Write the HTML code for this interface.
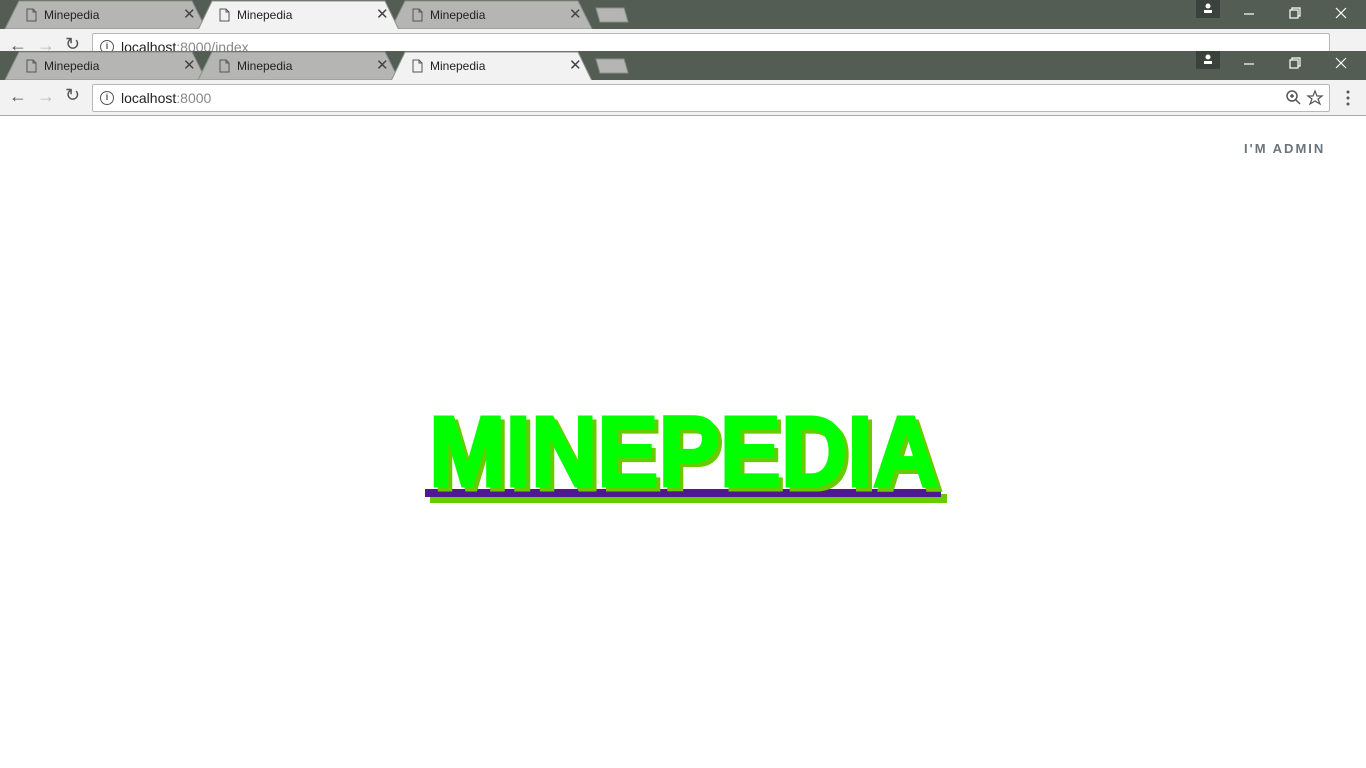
<!DOCTYPE html>
<html><head><meta charset="utf-8"><style>
*{margin:0;padding:0;box-sizing:border-box}
body{width:1366px;height:768px;overflow:hidden;background:#fff;font-family:"Liberation Sans",Arial,sans-serif;position:relative}
.chrome{position:absolute;left:0;width:1366px;height:117px;overflow:hidden}
.strip{position:absolute;left:0;top:0;width:1366px;height:29px;background:#535d53}
.tb{position:absolute;left:0;top:29px;width:1366px;height:36px;background:#f2f2f2;border-bottom:1px solid #a8a8a8}
.omni{position:absolute;left:92px;top:4px;width:1238px;height:28px;background:#fff;border:1px solid #b8b8b8;border-radius:2px}
.url{position:absolute;left:28px;top:5px;font-size:14px;color:#222}
.url span{color:#888}
.tabt{position:absolute;top:8px;font-size:12px;color:#222;font-family:"Liberation Sans",sans-serif}
.x{position:absolute;top:5px;font-size:15px;color:#444}
</style></head><body>

<div class="chrome" style="top:0;height:51px">
 <div class="strip">
  <svg width="1366" height="29" style="position:absolute;left:0;top:0">
   <polygon points="5,29 19,1 192,1 206,29" fill="#b5b6b3" stroke="#8b918b"/>
   <polygon points="391,29 405,1 578,1 592,29" fill="#b5b6b3" stroke="#8b918b"/>
   <polygon points="198,30 212,1 385,1 399,30" fill="#f2f2f2" stroke="#8b918b"/>
   <polygon points="596,8 624,8 628,22 600,22" fill="#b5b6b3" stroke="#8b918b"/>
   <g fill="none" stroke="#555" stroke-width="1"><path d="M27 9h6l3 3v9h-9z M33 9v3h3"/><path d="M220 9h6l3 3v9h-9z M226 9v3h3"/><path d="M413 9h6l3 3v9h-9z M419 9v3h3"/></g>
   <rect x="1196" y="0" width="24" height="18" fill="#3b423b"/>
   <circle cx="1208" cy="6" r="2.5" fill="#fff"/><rect x="1204" y="10" width="8" height="3" fill="#fff"/>
   <g stroke="#fff" stroke-width="1.2" fill="none"><path d="M1244 14h10"/><rect x="1290" y="10" width="8" height="8"/><path d="M1292 10v-2h8v8h-2"/><path d="M1336 8l10 10M1346 8l-10 10"/></g>
  </svg>
  <div class="tabt" style="left:44px">Minepedia</div><div class="x" style="left:183px">✕</div>
  <div class="tabt" style="left:237px">Minepedia</div><div class="x" style="left:376px">✕</div>
  <div class="tabt" style="left:430px">Minepedia</div><div class="x" style="left:569px">✕</div>
 </div>
 <div class="tb">
  <div style="position:absolute;left:9px;top:6px;font-size:18px;color:#555">←</div>
  <div style="position:absolute;left:37px;top:6px;font-size:18px;color:#bbb">→</div>
  <div style="position:absolute;left:65px;top:5px;font-size:18px;color:#555">↻</div>
  <div class="omni"><div style="position:absolute;left:7px;top:6px;width:14px;height:14px;border:1.5px solid #555;border-radius:50%;font-size:9px;text-align:center;line-height:11px;font-weight:bold;color:#555">i</div><div class="url">localhost<span>:8000/index</span></div></div>
 </div>
</div>

<div class="chrome" style="top:51px">
 <div class="strip">
  <svg width="1366" height="29" style="position:absolute;left:0;top:0">
   <polygon points="5,29 19,1 192,1 206,29" fill="#b5b6b3" stroke="#8b918b"/>
   <polygon points="198,29 212,1 385,1 399,29" fill="#b5b6b3" stroke="#8b918b"/>
   <polygon points="391,30 405,1 578,1 592,30" fill="#f2f2f2" stroke="#8b918b"/>
   <polygon points="596,8 624,8 628,22 600,22" fill="#b5b6b3" stroke="#8b918b"/>
   <g fill="none" stroke="#555" stroke-width="1"><path d="M27 9h6l3 3v9h-9z M33 9v3h3"/><path d="M220 9h6l3 3v9h-9z M226 9v3h3"/><path d="M413 9h6l3 3v9h-9z M419 9v3h3"/></g>
   <rect x="1196" y="0" width="24" height="18" fill="#3b423b"/>
   <circle cx="1208" cy="6" r="2.5" fill="#fff"/><rect x="1204" y="10" width="8" height="3" fill="#fff"/>
   <g stroke="#fff" stroke-width="1.2" fill="none"><path d="M1244 13h10"/><rect x="1290" y="9" width="8" height="8"/><path d="M1292 9v-2h8v8h-2"/><path d="M1336 7l10 10M1346 7l-10 10"/></g>
  </svg>
  <div class="tabt" style="left:44px">Minepedia</div><div class="x" style="left:183px">✕</div>
  <div class="tabt" style="left:237px">Minepedia</div><div class="x" style="left:376px">✕</div>
  <div class="tabt" style="left:430px">Minepedia</div><div class="x" style="left:569px">✕</div>
 </div>
 <div class="tb">
  <div style="position:absolute;left:9px;top:6px;font-size:18px;color:#555">←</div>
  <div style="position:absolute;left:37px;top:6px;font-size:18px;color:#bbb">→</div>
  <div style="position:absolute;left:65px;top:5px;font-size:18px;color:#555">↻</div>
  <div class="omni"><div style="position:absolute;left:7px;top:6px;width:14px;height:14px;border:1.5px solid #555;border-radius:50%;font-size:9px;text-align:center;line-height:11px;font-weight:bold;color:#555">i</div><div class="url">localhost<span>:8000</span>
   </div>
   <svg width="40" height="20" style="position:absolute;left:1192px;top:4px"><g fill="none" stroke="#555" stroke-width="1.5"><circle cx="7" cy="7" r="5"/><path d="M11 11l4 4M5 7h4M7 5v4"/><path d="M30 2l2 5h5l-4 3 2 5-5-3-5 3 2-5-4-3h5z" stroke-width="1.2"/></g></svg>
  </div>
  <svg width="6" height="16" style="position:absolute;left:1345px;top:10px"><g fill="#555"><circle cx="3" cy="2" r="1.5"/><circle cx="3" cy="8" r="1.5"/><circle cx="3" cy="14" r="1.5"/></g></svg>
 </div>
</div>

<div style="position:absolute;left:1244px;top:141px;font-size:13px;font-weight:bold;letter-spacing:2px;color:#6b747b">I'M ADMIN</div>

<svg width="1366" height="768" style="position:absolute;left:0;top:0">
 <rect x="430" y="494" width="517" height="9" fill="#66cc00"/>
 <rect x="425" y="489" width="516" height="8" fill="#4f1a8f"/>
 <text x="433" y="490" textLength="510" lengthAdjust="spacingAndGlyphs" font-family="Liberation Sans" font-weight="bold" font-size="100" fill="#66cc00" stroke="#66cc00" stroke-width="3" stroke-linejoin="miter">MINEPEDIA</text>
 <text x="429" y="486" textLength="510" lengthAdjust="spacingAndGlyphs" font-family="Liberation Sans" font-weight="bold" font-size="100" fill="#00ff00" stroke="#00ff00" stroke-width="3" stroke-linejoin="miter">MINEPEDIA</text>
</svg>
</body></html>
